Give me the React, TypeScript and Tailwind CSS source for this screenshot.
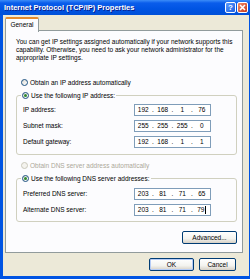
import React, { Fragment } from 'react';

function Radio({ checked, disabled }: { checked?: boolean; disabled?: boolean }) {
  return (
    <span
      className={`w-[7px] h-[7px] rounded-full border flex items-center justify-center shrink-0 ${
        disabled ? 'border-[#CAC8BB] bg-[#F4F3EE]' : 'border-[#1C5180] bg-[linear-gradient(135deg,#DCDBD4,#FFFFFF)]'
      }`}
    >
      {checked && <span className="w-[3px] h-[3px] rounded-full bg-[#2F8A2F]" />}
    </span>
  );
}

function RadioRow({ label, checked, disabled }: { label: string; checked?: boolean; disabled?: boolean }) {
  return (
    <div className={`h-[9px] flex items-center gap-[2px] ${disabled ? 'text-[#ACA899]' : 'text-black'}`}>
      <Radio checked={checked} disabled={disabled} />
      <span className="leading-[9px]">{label}</span>
    </div>
  );
}

function IpField({ parts, caret }: { parts: string[]; caret?: boolean }) {
  return (
    <div className="w-[77px] h-[12px] border border-[#7F9DB9] bg-white flex items-center leading-[10px]">
      {parts.map((p, i) => (
        <Fragment key={i}>
          {i > 0 && <span className="w-[3px] text-center">.</span>}
          <span className="flex-1 text-center">
            {p}
            {caret && i === 3 && <span className="inline-block w-px h-[8px] bg-black align-middle ml-px" />}
          </span>
        </Fragment>
      ))}
    </div>
  );
}

function FieldRow({ label, parts, caret }: { label: string; parts: string[]; caret?: boolean }) {
  return (
    <div className="flex items-center justify-between pl-[6px] pr-[25px]">
      <span>{label}</span>
      <IpField parts={parts} caret={caret} />
    </div>
  );
}

function XpButton({ label, width, isDefault }: { label: string; width: string; isDefault?: boolean }) {
  return (
    <button
      className={`${width} h-[13px] rounded-[2px] border border-[#003C74] bg-[linear-gradient(180deg,#FFFFFF_0%,#F3F3EF_60%,#D6D0C5_100%)] flex items-center justify-center leading-[10px] text-black ${
        isDefault ? 'shadow-[inset_0_0_0_1px_#B6CCF6]' : ''
      }`}
    >
      {label}
    </button>
  );
}

export default function App() {
  return (
    <div className="w-[250px] h-[279px] flex flex-col bg-[#0054E3] pl-[3px] pr-[1px] pb-[3px] font-['Liberation_Sans',Arial,sans-serif] text-[6.5px] overflow-hidden">
      {/* Title bar */}
      <div className="h-[15px] -ml-[3px] -mr-[1px] flex items-center justify-between pl-[4px] pr-[2px] bg-[linear-gradient(180deg,#3C8CF8_0%,#0A5DEB_20%,#0054E3_60%,#0050D8_100%)] shrink-0">
        <span className="text-white font-bold text-[7.5px] leading-none [text-shadow:1px_1px_0_#0A1E8C]">
          Internet Protocol (TCP/IP) Properties
        </span>
        <div className="flex items-center gap-[1px]">
          <div className="w-[11px] h-[11px] rounded-[2px] border border-white bg-[linear-gradient(135deg,#5A9BFF,#1F5FE0)] flex items-center justify-center text-white font-bold text-[8px] leading-none">
            ?
          </div>
          <div className="w-[11px] h-[11px] rounded-[2px] border border-white bg-[linear-gradient(135deg,#F08A6A,#C8391A)] flex items-center justify-center">
            <svg width="7" height="7" viewBox="0 0 7 7">
              <path d="M1 1 L6 6 M6 1 L1 6" stroke="white" strokeWidth="1.6" />
            </svg>
          </div>
        </div>
      </div>

      {/* Dialog body */}
      <div className="flex-1 bg-[#ECE9D8] flex flex-col pl-[2px] pr-[6px] pt-[2px]">
        {/* Tab strip */}
        <div className="flex h-[14px] relative z-10 -mb-px">
          <div className="w-[34px] h-[15px] border-x border-[#919B9C] border-t-2 border-t-[#E68B2C] bg-[#FCFCFE] rounded-t-[2px] flex items-center justify-center text-black leading-none">
            General
          </div>
        </div>

        {/* Tab panel */}
        <div className="h-[223px] border border-[#919B9C] bg-[#FCFCFE] flex flex-col pl-[10px] pr-[5px]">
          <p className="mt-[7px] leading-[8px] text-black">
            You can get IP settings assigned automatically if your network supports
            this capability. Otherwise, you need to ask your network administrator for
            the appropriate IP settings.
          </p>

          <div className="mt-[16px] pl-[5px]">
            <RadioRow label="Obtain an IP address automatically" />
          </div>

          <fieldset className="mt-[4px] border border-[#D0D0BF] rounded-[3px] pb-[6px] flex flex-col gap-[4px]">
            <legend className="ml-[4px] px-px bg-[#FCFCFE] mb-[4px]">
              <RadioRow label="Use the following IP address:" checked />
            </legend>
            <FieldRow label="IP address:" parts={['192', '168', '1', '76']} />
            <FieldRow label="Subnet mask:" parts={['255', '255', '255', '0']} />
            <FieldRow label="Default gateway:" parts={['192', '168', '1', '1']} />
          </fieldset>

          <div className="mt-[6px] pl-[5px]">
            <RadioRow label="Obtain DNS server address automatically" disabled />
          </div>

          <fieldset className="mt-[4px] border border-[#D0D0BF] rounded-[3px] pb-[5px] flex flex-col gap-[4px]">
            <legend className="ml-[4px] px-px bg-[#FCFCFE] mb-[5px]">
              <RadioRow label="Use the following DNS server addresses:" checked />
            </legend>
            <FieldRow label="Preferred DNS server:" parts={['203', '81', '71', '65']} />
            <FieldRow label="Alternate DNS server:" parts={['203', '81', '71', '79']} caret />
          </fieldset>

          <div className="mt-[9px] flex justify-end">
            <XpButton label="Advanced..." width="w-[55px]" />
          </div>
        </div>

        {/* Bottom buttons */}
        <div className="mt-[5px] flex justify-end gap-[5px] pr-[7px]">
          <XpButton label="OK" width="w-[45px]" isDefault />
          <XpButton label="Cancel" width="w-[37px]" />
        </div>
      </div>
    </div>
  );
}
